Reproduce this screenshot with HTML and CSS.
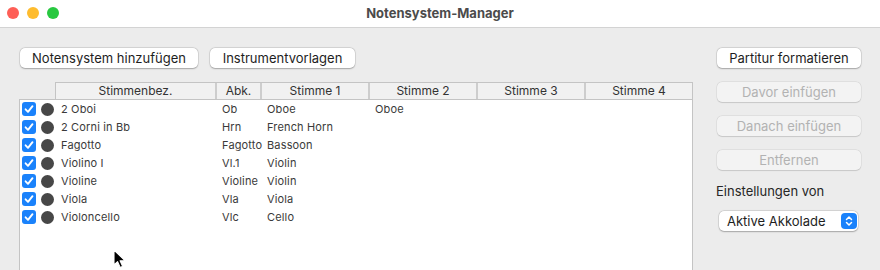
FILE: index.html
```html
<!DOCTYPE html>
<html lang="de">
<head>
<meta charset="utf-8">
<link rel="stylesheet" href="styles.css">
</head>
<body>
<div class="window">
  <div class="titlebar">
    <div class="lights">
      <span class="light red"></span>
      <span class="light yellow"></span>
      <span class="light green"></span>
    </div>
    <div class="title">Notensystem-Manager</div>
  </div>
  <div class="content">
    <div class="left">
      <div class="toolbar">
        <button class="btn w178">Notensystem hinzufügen</button>
        <button class="btn w145">Instrumentvorlagen</button>
      </div>
      <div class="header">
        <div class="hc">Stimmenbez.</div>
        <div class="hc">Abk.</div>
        <div class="hc">Stimme 1</div>
        <div class="hc">Stimme 2</div>
        <div class="hc">Stimme 3</div>
        <div class="hc">Stimme 4</div>
      </div>
      <div class="list">
        <div class="row"><div class="ind"><span class="cb"><svg viewBox="0 0 14 14"><path d="M3.6 7.3 L6 9.8 L10.5 4.2" /></svg></span><span class="dot"></span></div><div class="c">2 Oboi</div><div class="c">Ob</div><div class="c">Oboe</div><div class="c">Oboe</div><div class="c"></div><div class="c"></div></div>
        <div class="row"><div class="ind"><span class="cb"><svg viewBox="0 0 14 14"><path d="M3.6 7.3 L6 9.8 L10.5 4.2" /></svg></span><span class="dot"></span></div><div class="c">2 Corni in Bb</div><div class="c">Hrn</div><div class="c">French Horn</div><div class="c"></div><div class="c"></div><div class="c"></div></div>
        <div class="row"><div class="ind"><span class="cb"><svg viewBox="0 0 14 14"><path d="M3.6 7.3 L6 9.8 L10.5 4.2" /></svg></span><span class="dot"></span></div><div class="c">Fagotto</div><div class="c">Fagotto</div><div class="c">Bassoon</div><div class="c"></div><div class="c"></div><div class="c"></div></div>
        <div class="row"><div class="ind"><span class="cb"><svg viewBox="0 0 14 14"><path d="M3.6 7.3 L6 9.8 L10.5 4.2" /></svg></span><span class="dot"></span></div><div class="c">Violino I</div><div class="c">Vl.1</div><div class="c">Violin</div><div class="c"></div><div class="c"></div><div class="c"></div></div>
        <div class="row"><div class="ind"><span class="cb"><svg viewBox="0 0 14 14"><path d="M3.6 7.3 L6 9.8 L10.5 4.2" /></svg></span><span class="dot"></span></div><div class="c">Violine</div><div class="c">Violine</div><div class="c">Violin</div><div class="c"></div><div class="c"></div><div class="c"></div></div>
        <div class="row"><div class="ind"><span class="cb"><svg viewBox="0 0 14 14"><path d="M3.6 7.3 L6 9.8 L10.5 4.2" /></svg></span><span class="dot"></span></div><div class="c">Viola</div><div class="c">Vla</div><div class="c">Viola</div><div class="c"></div><div class="c"></div><div class="c"></div></div>
        <div class="row"><div class="ind"><span class="cb"><svg viewBox="0 0 14 14"><path d="M3.6 7.3 L6 9.8 L10.5 4.2" /></svg></span><span class="dot"></span></div><div class="c">Violoncello</div><div class="c">Vlc</div><div class="c">Cello</div><div class="c"></div><div class="c"></div><div class="c"></div></div>
      </div>
    </div>
    <div class="right">
      <button class="btn">Partitur formatieren</button>
      <button class="btn disabled">Davor einfügen</button>
      <button class="btn disabled">Danach einfügen</button>
      <button class="btn disabled">Entfernen</button>
      <div class="label">Einstellungen von</div>
      <div class="select">
        <span>Aktive Akkolade</span>
        <span class="stepper"><svg viewBox="0 0 16 16"><path d="M5.5 6.5 L8 4 L10.5 6.5 M5.5 9.5 L8 12 L10.5 9.5" /></svg></span>
      </div>
    </div>
  </div>
  <svg class="cursor" viewBox="0 0 14 20" width="14" height="20"><path d="M1 1 L1 16 L4.6 12.6 L7.2 18.4 L9.6 17.3 L7.1 11.7 L12 11.7 Z" fill="#000" stroke="#fff" stroke-width="1.1" stroke-linejoin="round"/></svg>
</div>
</body>
</html>
```

FILE: styles.css
```css
* { box-sizing: border-box; }
html, body { margin: 0; padding: 0; }
body {
  width: 880px;
  height: 270px;
  overflow: hidden;
  background: #ececec;
  font-family: Inter, "Noto Sans", sans-serif;
  color: #222;
}
.window {
  position: relative;
  width: 880px;
  height: 270px;
  overflow: hidden;
}
.titlebar {
  height: 28px;
  background: #ffffff;
  border-bottom: 1px solid #d3d3d3;
  display: flex;
  align-items: center;
  position: relative;
}
.lights {
  display: flex;
  gap: 8px;
  padding-left: 7px;
  position: absolute;
  left: 0;
  top: 7px;
}
.light {
  width: 12px;
  height: 12px;
  border-radius: 50%;
  display: block;
}
.red { background: #fe5f57; }
.yellow { background: #febc2e; }
.green { background: #28c840; }
.title {
  flex: 1;
  text-align: center;
  font-size: 13px;
  font-weight: 700;
  color: #4b4b4b;
  margin-top: -1px;
}
.content {
  display: flex;
  padding: 20px 0 0 19px;
}
.left {
  width: 674px;
  display: flex;
  flex-direction: column;
}
.toolbar {
  display: flex;
  gap: 12px;
  padding-left: 1px;
}
.btn {
  height: 20px;
  border: none;
  border-radius: 5px;
  background: #ffffff;
  box-shadow: 0 0 0 0.5px rgba(0,0,0,0.12), 0 0.5px 1.5px rgba(0,0,0,0.25);
  font-family: Inter, "Noto Sans", sans-serif;
  font-size: 13px;
  color: #1e1e1e;
  padding: 0;
  text-align: center;
  line-height: 20px;
}
.w178 { width: 178px; }
.w145 { width: 145px; }
.header {
  margin-top: 14px;
  margin-left: 36px;
  height: 17px;
  display: grid;
  grid-template-columns: 161px 45px 108px 108px 108px 1fr;
  background: #f1f1f1;
  border-top: 1px solid #c4c4c4;
  border-left: 1px solid #c4c4c4;
  border-right: 1px solid #c4c4c4;
}
.hc {
  font-size: 12px;
  line-height: 16px;
  color: #333;
  text-align: center;
  border-right: 2px solid #cdcdcd;
}
.hc:last-child { border-right: none; }
.list {
  height: 180px;
  background: #ffffff;
  border: 1px solid #c4c4c4;
  border-bottom: none;
}
.row {
  height: 18px;
  display: grid;
  grid-template-columns: 35px 161px 45px 108px 108px 108px 1fr;
  align-items: center;
  font-size: 11px;
  letter-spacing: 0.15px;
  color: #3a3a3a;
}
.ind {
  display: flex;
  align-items: center;
  padding-left: 2px;
  gap: 5px;
}
.cb {
  width: 14px;
  height: 14px;
  border-radius: 3px;
  background: #1a82fb;
  display: block;
}
.cb svg {
  width: 14px;
  height: 14px;
  display: block;
  fill: none;
  stroke: #fff;
  stroke-width: 1.9;
  stroke-linecap: round;
  stroke-linejoin: round;
}
.dot {
  width: 13px;
  height: 13px;
  border-radius: 50%;
  background: #474747;
  display: block;
}
.c {
  padding-left: 6px;
  white-space: nowrap;
  line-height: 18px;
}
.right {
  margin-left: 24px;
  width: 144px;
  display: flex;
  flex-direction: column;
  gap: 14px;
}
.btn.disabled {
  background: #f3f3f3;
  color: #b2b2b2;
  box-shadow: 0 0 0 0.5px rgba(0,0,0,0.08), 0 0.5px 1px rgba(0,0,0,0.12);
}
.label {
  font-size: 13px;
  line-height: 16px;
  color: #262626;
  margin-left: -1px;
  margin-top: -1px;
}
.select {
  margin-left: 2px;
  margin-top: -2px;
  width: 139px;
  height: 20px;
  background: #fff;
  border-radius: 5px;
  box-shadow: 0 0 0 0.5px rgba(0,0,0,0.12), 0 0.5px 1.5px rgba(0,0,0,0.25);
  display: flex;
  align-items: center;
  justify-content: space-between;
  padding: 0 1px 0 8px;
  font-size: 13px;
  color: #1e1e1e;
}
.stepper {
  width: 16px;
  height: 16px;
  border-radius: 4px;
  background: #1a82fb;
  display: block;
}
.stepper svg {
  width: 16px;
  height: 16px;
  display: block;
  fill: none;
  stroke: #fff;
  stroke-width: 1.5;
  stroke-linecap: round;
  stroke-linejoin: round;
}
.cursor {
  position: absolute;
  left: 113px;
  top: 249px;
}
```
